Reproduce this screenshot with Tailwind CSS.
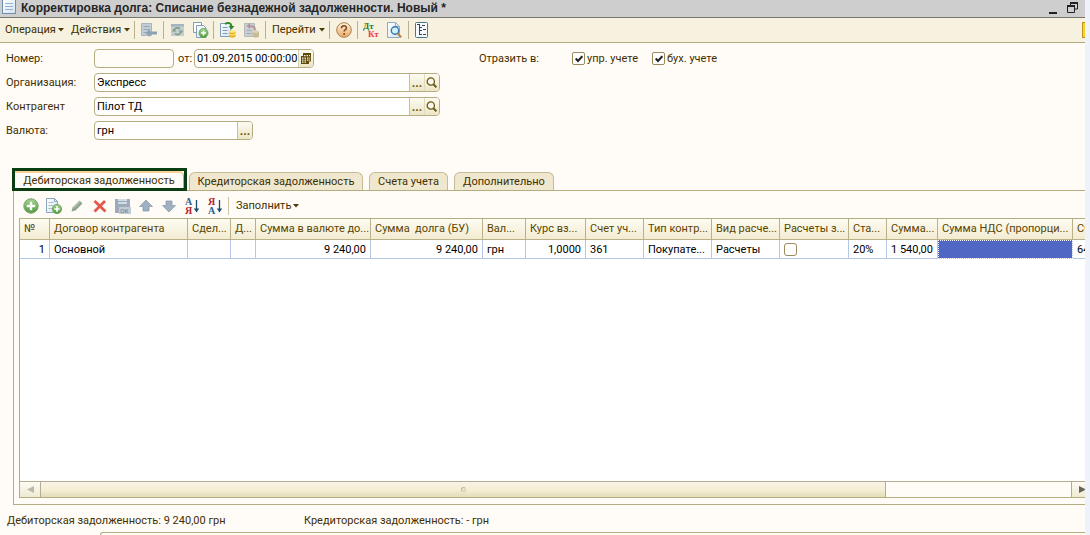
<!DOCTYPE html>
<html lang="ru">
<head>
<meta charset="utf-8">
<meta name="viewport" content="width=device-width, initial-scale=1">
<title>Корректировка долга</title>
<script src="https://cdn.jsdelivr.net/npm/@tailwindcss/browser@4"></script>
</head>
<body class="h-screen overflow-hidden bg-[#eef2fa] pr-[5px] font-['Roboto','Liberation_Sans',sans-serif] text-[11px] leading-4 text-[#3f2f00]">

<svg class="absolute h-0 w-0" aria-hidden="true">
  <defs>
    <linearGradient id="green" x1="0" y1="0" x2="0" y2="1"><stop offset="0" stop-color="#a5d491"/><stop offset="1" stop-color="#4d9a3c"/></linearGradient>
    <linearGradient id="orange" x1="0" y1="0" x2="0" y2="1"><stop offset="0" stop-color="#fff3df"/><stop offset="1" stop-color="#efa764"/></linearGradient>
    <linearGradient id="paper" x1="0" y1="0" x2="1" y2="1"><stop offset="0" stop-color="#ffffff"/><stop offset="1" stop-color="#d5e3ee"/></linearGradient>
    <symbol id="caret" viewBox="0 0 6 4"><path d="M0 0h6L3 3.500z" fill="#4d3c0a"/></symbol>
    <symbol id="glass" viewBox="0 0 12 12"><circle cx="4.800" cy="4.500" r="3.600" fill="#fdfbf0" stroke="#6b5714" stroke-width="1.300"/><path d="M7.400 7.200l3 3.200" stroke="#6b5714" stroke-width="2"/></symbol>
    <symbol id="adddoc" viewBox="0 0 16 16"><path d="M.5 .5h8l3 3v11h-11z" fill="url(#paper)" stroke="#8aa5bd"/><path d="M8.500 .5v3h3" fill="none" stroke="#8aa5bd"/><path d="M2.500 4.500h5M2.500 7.500h5M2.500 10.500h4" stroke="#a9bdce"/><circle cx="11" cy="11" r="4.600" fill="url(#green)" stroke="#5c9e4d" stroke-width=".8"/><path d="M11 8.300v5.400M8.300 11h5.400" stroke="#fff" stroke-width="1.700"/></symbol>
  </defs>
</svg>

<div class="flex h-full flex-col overflow-hidden bg-[#fffcf7]">

  <!-- Window title -->
  <header class="flex h-[18px] shrink-0 items-center border-b border-[#77766f] bg-[#cecece] pl-[2px] pr-[7px]">
    <svg class="mb-[3px] h-[14px] w-[14px] shrink-0" viewBox="0 0 14 14"><rect x=".5" y="-1" width="13" height="14.500" fill="url(#paper)" stroke="#6d8fae"/><path d="M3 3.500h8M3 6.500h8M3 9.500h8" stroke="#8fb4d8"/></svg>
    <h1 class="ml-[5px] whitespace-nowrap pb-[2px] font-['Liberation_Sans'] text-[12px] font-bold text-[#252525]">Корректировка долга: Списание безнадежной задолженности. Новый *</h1>
    <button class="mb-[2px] ml-auto mr-[10px]" aria-label="Свернуть"><svg class="block h-[12px] w-2" viewBox="0 0 8 12"><path d="M0 10h8v2H0z" fill="#222"/></svg></button>
    <button class="mb-[2px]" aria-label="Развернуть"><svg class="block h-[11px] w-[11px]" viewBox="0 0 11 11"><path d="M3.500 3V1h7v6H8" fill="none" stroke="#222"/><path d="M3 0h8v2H3zM0 3h8v2H0z" fill="#222"/><path d="M.5 4v6.500h7V4" fill="none" stroke="#222"/></svg></button>
  </header>

  <!-- Main toolbar -->
  <nav class="flex h-[25px] shrink-0 items-center whitespace-nowrap border-b border-[#b3aa7e] bg-[#f7f1df] pl-[5px]">
    <button class="flex w-[59px] shrink-0 items-center justify-between">Операция<svg class="h-1 w-[6px] shrink-0"><use href="#caret"/></svg></button>
    <button class="ml-[7px] flex w-[59px] shrink-0 items-center justify-between">Действия<svg class="h-1 w-[6px] shrink-0"><use href="#caret"/></svg></button>
    <span class="ml-1 h-[18px] w-px bg-[#b9b18d]"></span>
    <button class="ml-[6px]" aria-label="Записать"><svg class="h-4 w-4" viewBox="0 0 16 16"><path d="M.5 1.500h10v12h-10z" fill="#c3cdd6" stroke="#a9b4be"/><path d="M2.500 4.500h6M2.500 7.500h6M2.500 10.500h6" stroke="#98a6b3"/><path d="M4.500 11l4.500-4v2.500h7v3H9V15z" fill="#8ea1b4"/></svg></button>
    <span class="ml-[6px] h-[18px] w-px bg-[#b9b18d]"></span>
    <button class="ml-[6px]" aria-label="Перечитать"><svg class="h-4 w-4" viewBox="0 0 16 16"><path d="M1 2h13v12H1z" fill="#c4cdd0"/><path d="M1 2h13v2.500H1z" fill="#a7b3be"/><path d="M4 9a3.500 3.500 0 0 1 6-2M11 9a3.500 3.500 0 0 1-6 2.500" fill="none" stroke="#7e9f84" stroke-width="1.600"/><path d="M1.800 9.500h4.500L4 6.500zM8.700 8.500h4.500L11 11.500z" fill="#7e9f84"/></svg></button>
    <button class="ml-[7px]" aria-label="Скопировать"><svg class="h-4 w-4" viewBox="0 0 16 16"><path d="M.5 .5h8v10h-8z" fill="#fff" stroke="#7f9db9"/><path d="M3.500 3.500h7l2.500 2.500v9.500H3.500z" fill="url(#paper)" stroke="#7f9db9"/><circle cx="10.500" cy="11" r="4.500" fill="url(#green)" stroke="#5c9e4d" stroke-width=".8"/><path d="M10.500 8.400v5.200M7.900 11h5.200" stroke="#fff" stroke-width="1.700"/></svg></button>
    <span class="ml-1 h-[18px] w-px bg-[#b9b18d]"></span>
    <button class="ml-[6px]" aria-label="Провести"><svg class="h-4 w-4" viewBox="0 0 16 16"><path d="M.5 1.500h10v13h-10z" fill="url(#paper)" stroke="#7f9db9"/><path d="M2.500 5.500h5M2.500 8.500h5M2.500 11.500h5" stroke="#7e9cb8"/><path d="M5 2c3-2 6-1 6.500 2" fill="none" stroke="#2c8a2c" stroke-width="2"/><path d="M8.500 4h6l-3 3.500z" fill="#2c8a2c"/><path d="M9 9.500v5c1 1.500 5.500 1.500 6.500 0v-5z" fill="#e9b31f"/><ellipse cx="12.200" cy="9.500" rx="3.300" ry="1.300" fill="#ffe67c"/><path d="M9 12c1 1.300 5.500 1.300 6.500 0" fill="none" stroke="#fff0a0"/></svg></button>
    <button class="ml-[8px]" aria-label="Отмена проведения"><svg class="h-4 w-4" viewBox="0 0 16 16"><path d="M.5 1.500h10v13h-10z" fill="#c9cfd2" stroke="#b4bbc0"/><path d="M2.500 8.500h5M2.500 11.500h5" stroke="#a2abb2"/><path d="M5 4.500c4-1 6 0 6 4" fill="none" stroke="#b79696" stroke-width="2"/><path d="M6 1v6L2.500 4z" fill="#b79696"/><path d="M8.500 9.500v5c1 1.500 5.500 1.500 6.500 0v-5z" fill="#c9bc94"/><ellipse cx="11.700" cy="9.500" rx="3.300" ry="1.300" fill="#ddd5b8"/></svg></button>
    <span class="ml-[5px] h-[18px] w-px bg-[#b9b18d]"></span>
    <button class="ml-[6px] flex w-[53px] shrink-0 items-center justify-between">Перейти<svg class="h-1 w-[6px] shrink-0"><use href="#caret"/></svg></button>
    <span class="ml-1 h-[18px] w-px bg-[#b9b18d]"></span>
    <button class="ml-[6px]" aria-label="Справка"><svg class="h-4 w-4" viewBox="0 0 16 16"><circle cx="8" cy="8" r="7.300" fill="url(#orange)" stroke="#a98153"/><path d="M5.500 6.300c0-3.400 5-3.200 5-.4 0 1.700-2.400 1.700-2.400 3.700" fill="none" stroke="#7c4d1e" stroke-width="1.500"/><circle cx="8.100" cy="12" r="1" fill="#7c4d1e"/></svg></button>
    <span class="ml-[5px] h-[18px] w-px bg-[#b9b18d]"></span>
    <button class="ml-[5px]" aria-label="Дт/Кт"><svg class="h-4 w-[17px]" viewBox="0 0 17 16" font-family="Liberation Serif" font-size="9" font-weight="bold"><text x="0" y="7" fill="#23802a">Дт</text><text x="5" y="15" fill="#ee3a44">Кт</text></svg></button>
    <button class="ml-[7px]" aria-label="Найти"><svg class="h-4 w-4" viewBox="0 0 16 16"><path d="M.5 .5h8l4 4v11H.5z" fill="url(#paper)" stroke="#8fabc4"/><path d="M8.500 .5v4h4" fill="none" stroke="#8fabc4"/><circle cx="8" cy="8.500" r="3.700" fill="#d5f0fb" stroke="#3277a8" stroke-width="1.400"/><path d="M10.700 11.500l3.500 3.700" stroke="#b58345" stroke-width="2"/></svg></button>
    <span class="ml-[5px] h-[18px] w-px bg-[#b9b18d]"></span>
    <button class="ml-[6px]" aria-label="Структура"><svg class="h-4 w-[14px]" viewBox="0 0 14 16"><rect x=".5" y=".5" width="12" height="15" rx="1" fill="#f5fafc" stroke="#48768c"/><path d="M2 2.500h3M7 3.500h3M4.500 3v10M5 5.500h2M8 7.500h3M5 8.500h2M8 12.500h3M5 12.500h2" stroke="#37444d"/></svg></button>
    <span class="ml-auto h-4 w-[3px] border-y border-l border-[#bd9327] bg-[#fbd21c]"></span>
  </nav>

  <!-- Document header -->
  <form class="flex shrink-0 flex-col gap-[5px] pl-[6px] pt-[6px]">
    <div class="flex h-[19px] items-center">
      <label for="num" class="w-[88px]">Номер:</label>
      <input id="num" class="h-[19px] w-20 rounded-[4px] border border-[#b5ad82] bg-[#fffcf7] px-1">
      <label for="date" class="ml-1 w-4">от:</label>
      <div class="flex h-[19px] w-[120px] overflow-hidden rounded-[4px] border border-[#b5ad82] bg-white">
        <input id="date" value="01.09.2015 00:00:00" class="min-w-0 flex-1 pl-[2px] text-black">
        <button type="button" class="flex w-[15px] items-center justify-center border-l border-[#d6cfaa] bg-linear-to-b from-[#fdfbf2] to-[#ece5c6]" aria-label="Календарь"><svg class="h-[11px] w-[10px]" viewBox="0 0 10 11"><path d="M2 0h8v8.500H8V11H0V3h2z" fill="#5e4a0c"/><path d="M3 2h1.500v1.200H3zM5.500 2H7v1.200H5.500zM8 2h1v1.200H8zM1 4.500h1.500v1.200H1zM3.500 4.500H5v1.200H3.500zM6 4.500h1.500v1.200H6zM1 6.500h1.500v1.200H1zM3.500 6.500H5v1.200H3.500zM6 6.500h1.500v1.200H6zM1 8.500h1.500v1.200H1zM3.500 8.500H5v1.200H3.500zM8.300 4.500h.9v1.200h-.9zM8.300 6.500h.9v1.200h-.9z" fill="#f5f0da"/></svg></button>
      </div>
      <span class="ml-[165px] w-[93px]">Отразить в:</span>
      <label class="relative flex w-20 items-center gap-[2px] whitespace-nowrap"><input type="checkbox" checked class="h-[13px] w-[13px] appearance-none rounded-[2px] border border-[#9a8c5c] bg-white"><svg class="pointer-events-none absolute left-[3px] h-2 w-2" viewBox="0 0 8 8"><path d="M.7 3.500l2.300 2.500L7.300 1.200" fill="none" stroke="#222" stroke-width="2"/></svg>упр. учете</label>
      <label class="relative flex items-center gap-[2px] whitespace-nowrap"><input type="checkbox" checked class="h-[13px] w-[13px] appearance-none rounded-[2px] border border-[#9a8c5c] bg-white"><svg class="pointer-events-none absolute left-[3px] h-2 w-2" viewBox="0 0 8 8"><path d="M.7 3.500l2.300 2.500L7.300 1.200" fill="none" stroke="#222" stroke-width="2"/></svg>бух. учете</label>
    </div>
    <div class="flex h-[19px] items-center">
      <label for="org" class="w-[88px]">Организация:</label>
      <div class="flex h-[19px] w-[346px] overflow-hidden rounded-[4px] border border-[#b5ad82] bg-white">
        <input id="org" value="Экспресс" class="min-w-0 flex-1 pl-[2px] text-black">
        <button type="button" class="w-[15px] border-l border-[#c9c196] bg-linear-to-b from-[#fdfbf2] to-[#ece5c6] text-[12px] font-bold text-[#6b5714]" aria-label="Выбрать">...</button>
        <button type="button" class="flex w-[15px] items-center justify-center border-l border-[#e0dabb] bg-linear-to-b from-[#fdfbf2] to-[#ece5c6]" aria-label="Открыть"><svg class="h-3 w-3"><use href="#glass"/></svg></button>
      </div>
    </div>
    <div class="flex h-[19px] items-center">
      <label for="agent" class="w-[88px]">Контрагент</label>
      <div class="flex h-[19px] w-[346px] overflow-hidden rounded-[4px] border border-[#b5ad82] bg-white">
        <input id="agent" value="Пілот ТД" class="min-w-0 flex-1 pl-[2px] text-black">
        <button type="button" class="w-[15px] border-l border-[#c9c196] bg-linear-to-b from-[#fdfbf2] to-[#ece5c6] text-[12px] font-bold text-[#6b5714]" aria-label="Выбрать">...</button>
        <button type="button" class="flex w-[15px] items-center justify-center border-l border-[#e0dabb] bg-linear-to-b from-[#fdfbf2] to-[#ece5c6]" aria-label="Открыть"><svg class="h-3 w-3"><use href="#glass"/></svg></button>
      </div>
    </div>
    <div class="flex h-[19px] items-center">
      <label for="cur" class="w-[88px]">Валюта:</label>
      <div class="flex h-[19px] w-[159px] overflow-hidden rounded-[4px] border border-[#b5ad82] bg-white">
        <input id="cur" value="грн" class="min-w-0 flex-1 pl-[2px] text-black">
        <button type="button" class="w-[15px] border-l border-[#c9c196] bg-linear-to-b from-[#fdfbf2] to-[#ece5c6] text-[12px] font-bold text-[#6b5714]" aria-label="Выбрать">...</button>
      </div>
    </div>
  </form>

  <!-- Tabs -->
  <div class="mt-7 flex shrink-0 items-end whitespace-nowrap pl-3" role="tablist">
    <button role="tab" aria-selected="true" class="z-10 -mb-px h-[23px] w-[175px] border-3 border-[#0a3d12] bg-[#fffcf7]"><span class="block h-[17px] rounded-tr-[5px] border-r border-t-2 border-r-[#b5ad82] border-t-[#fbcf95]">Дебиторская задолженность</span></button>
    <button role="tab" class="ml-[2px] h-[18px] w-[174px] rounded-t-[6px] border border-b-0 border-[#c4bc94] bg-[#efe8cf]">Кредиторская задолженность</button>
    <button role="tab" class="ml-[6px] h-[18px] w-[79px] rounded-t-[6px] border border-b-0 border-[#c4bc94] bg-[#efe8cf]">Счета учета</button>
    <button role="tab" class="ml-[6px] h-[18px] w-[100px] rounded-t-[6px] border border-b-0 border-[#c4bc94] bg-[#efe8cf]">Дополнительно</button>
  </div>

  <!-- Tab page -->
  <section class="ml-[13px] flex min-h-0 flex-1 flex-col border-y border-l border-[#b5ad82] pb-[6px] pl-[5px]">
    <div class="flex h-[27px] shrink-0 items-center gap-[7px] pl-1 pt-[3px]">
      <button aria-label="Добавить"><svg class="h-4 w-4" viewBox="0 0 16 16"><circle cx="8" cy="8" r="7.200" fill="url(#green)" stroke="#7f9c74"/><path d="M8 3.800v8.400M3.800 8h8.400" stroke="#fff" stroke-width="2.400"/></svg></button>
      <button aria-label="Добавить копированием"><svg class="h-4 w-4"><use href="#adddoc"/></svg></button>
      <button aria-label="Изменить"><svg class="h-4 w-4" viewBox="0 0 16 16"><path d="M2.500 13.500l1-4 7-7 3 3-7 7z" fill="#8fa68f"/><path d="M4.500 9.500l6-6" stroke="#bccabb" stroke-width="1.200"/></svg></button>
      <button aria-label="Удалить"><svg class="h-4 w-4" viewBox="0 0 16 16"><path d="M2.500 3l11 10.500M13 3L2.500 13.500" stroke="#e4574a" stroke-width="2.800"/></svg></button>
      <button aria-label="Закончить"><svg class="h-4 w-4" viewBox="0 0 16 16"><path d="M0 1h15v14H0z" fill="#9dacbc"/><path d="M3 1h9v5H3z" fill="#d3dce4"/><path d="M3 3.500h9" stroke="#9dacbc"/><path d="M4 9h12v7H4z" fill="#c3ccd5"/><text x="5" y="15" font-size="6" font-weight="bold" font-family="Liberation Sans" fill="#7f90a1">ОК</text></svg></button>
      <button aria-label="Вверх"><svg class="h-4 w-4" viewBox="0 0 16 16"><path d="M8 2l6.500 6.500H11V13H5V8.500H1.500z" fill="#9fb0c3" stroke="#8597ab" stroke-width=".7"/></svg></button>
      <button aria-label="Вниз"><svg class="h-4 w-4" viewBox="0 0 16 16"><path d="M8 14l6.500-6.500H11V3H5v4.500H1.500z" fill="#9fb0c3" stroke="#8597ab" stroke-width=".7"/></svg></button>
      <button aria-label="По возрастанию"><svg class="h-4 w-4 overflow-visible" viewBox="0 0 16 16" font-family="Liberation Serif" font-size="10" font-weight="bold"><text x="1" y="7" fill="#27618f">А</text><text x="1" y="16" fill="#b4232b">Я</text><path d="M12.500 2v10" stroke="#1f4e6e" stroke-width="1.300"/><path d="M9.800 10.500h5.400l-2.700 4z" fill="#1f4e6e"/></svg></button>
      <button aria-label="По убыванию"><svg class="h-4 w-4 overflow-visible" viewBox="0 0 16 16" font-family="Liberation Serif" font-size="10" font-weight="bold"><text x="1" y="7" fill="#b4232b">Я</text><text x="1" y="16" fill="#27618f">А</text><path d="M12.500 2v10" stroke="#1f4e6e" stroke-width="1.300"/><path d="M9.800 10.500h5.400l-2.700 4z" fill="#1f4e6e"/></svg></button>
      <span class="-ml-[2px] h-[18px] w-px bg-[#c9c2a5]"></span>
      <button class="flex w-[63px] items-center justify-between">Заполнить<svg class="h-1 w-[6px] shrink-0"><use href="#caret"/></svg></button>
    </div>

    <div class="flex min-h-0 flex-1 flex-col overflow-hidden border-y border-l border-[#b5ad82] bg-white">
      <div class="min-h-0 flex-1 overflow-hidden">
        <table class="w-[1153px] table-fixed border-separate border-spacing-0 whitespace-nowrap">
          <colgroup><col class="w-[30px]"><col class="w-[138px]"><col class="w-[43px]"><col class="w-[25px]"><col class="w-[115px]"><col class="w-[112px]"><col class="w-[43px]"><col class="w-[60px]"><col class="w-[58px]"><col class="w-[68px]"><col class="w-[68px]"><col class="w-[69px]"><col class="w-[38px]"><col class="w-[51px]"><col class="w-[135px]"><col class="w-[100px]"></colgroup>
          <thead>
            <tr class="h-[21px] bg-linear-to-b from-[#fdfbf2] to-[#f3ebd0] text-left text-[#5a4500] *:overflow-hidden *:border-b *:border-r *:border-[#b9b18a] *:pl-1 *:font-normal">
              <th>№</th><th>Договор контрагента</th><th>Сдел...</th><th>Д...</th><th>Сумма в валюте до...</th><th>Сумма&nbsp; долга (БУ)</th><th>Вал...</th><th>Курс вз...</th><th>Счет уч...</th><th>Тип контр...</th><th>Вид расче...</th><th>Расчеты з...</th><th>Ста...</th><th>Сумма...</th><th>Сумма НДС (пропорци...</th><th>Счет</th>
            </tr>
          </thead>
          <tbody>
            <tr class="h-[19px] text-black *:overflow-hidden *:border-b *:border-r *:border-[#b4c8e6] *:px-1 *:pt-px">
              <td class="text-right">1</td><td>Основной</td><td></td><td></td><td class="text-right">9 240,00</td><td class="text-right">9 240,00</td><td>грн</td><td class="text-right">1,0000</td><td>361</td><td>Покупате...</td><td>Расчеты</td><td><input type="checkbox" aria-label="Расчеты" class="block h-[13px] w-[13px] appearance-none rounded-[3px] border border-[#9a8c5c] bg-white"></td><td>20%</td><td class="text-right">1 540,00</td><td class="bg-[#5068c4] outline-1 -outline-offset-1 outline-dotted outline-white"></td><td>643</td>
            </tr>
          </tbody>
        </table>
      </div>
      <div class="flex h-4 shrink-0 border-t border-[#b5ad92] bg-[#fffcf7]">
        <button class="flex w-[21px] items-center justify-center border-r border-[#b5ad92] bg-linear-to-b from-[#fdfbf4] to-[#f0ead2]" aria-label="Влево"><svg class="h-[7px] w-[7px]" viewBox="0 0 7 7"><path d="M7 0v7L0 3.500z" fill="#bdb9a8"/></svg></button>
        <div class="flex flex-[845] items-center justify-center border-r border-[#b5ad92] bg-linear-to-b from-[#f7f3e6] via-[#f6efd5] to-[#e3dcb8]"><span class="h-[5px] w-[5px] rounded-full border border-[#d5cfb0] border-l-[#bdb695] border-t-[#bdb695] bg-[#efe9d2]"></span></div>
        <div class="flex-[185]"></div>
        <button class="flex w-[14px] items-center justify-end border-l border-[#b5ad92] bg-linear-to-b from-[#fdfbf4] to-[#f0ead2]" aria-label="Вправо"><svg class="h-[7px] w-[6px]" viewBox="0 0 6 7"><path d="M0 0v7l7-3.500z" fill="#66635c"/></svg></button>
      </div>
    </div>
  </section>

  <!-- Totals -->
  <footer class="flex h-[27px] shrink-0 items-center pl-[7px] pt-1">
    <span class="w-[297px]">Дебиторская задолженность: 9 240,00 грн</span>
    <span>Кредиторская задолженность: - грн</span>
  </footer>
  <div class="ml-[100px] h-[3px] shrink-0 rounded-tl-[4px] border-l border-t border-[#b5ad82] bg-[#fffcf7]"></div>
</div>
</body>
</html>
